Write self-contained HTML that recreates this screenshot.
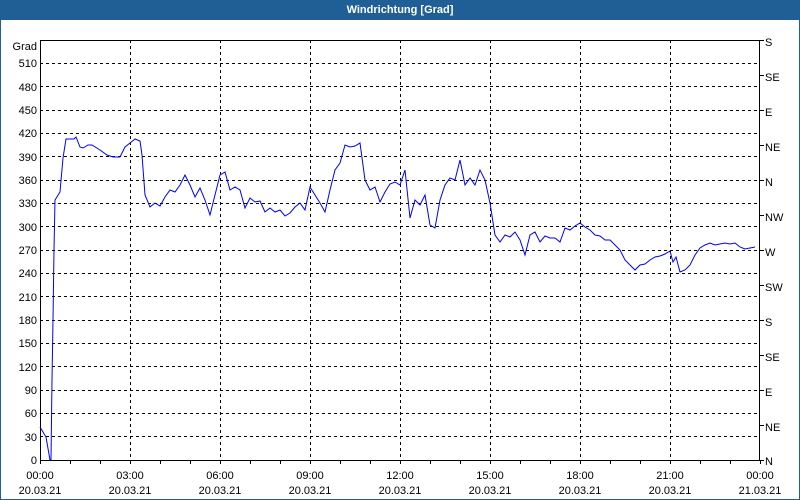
<!DOCTYPE html>
<html><head><style>
html,body{margin:0;padding:0;background:#fff;}
body{width:800px;height:500px;overflow:hidden;position:relative;font-family:"Liberation Sans",sans-serif;}
.title{position:absolute;left:0;top:0;width:800px;height:20px;background:#1f5f96;color:#fff;font-weight:bold;font-size:11px;text-align:center;line-height:20px;}
.frame{position:absolute;left:0;top:20px;width:798px;height:479px;border-left:1px solid #1f5f96;border-right:1px solid #1f5f96;border-bottom:1px solid #1f5f96;}
svg{position:absolute;left:0;top:0;}
text{font-family:"Liberation Sans",sans-serif;font-size:11px;fill:#000;}
</style></head><body>
<div class="title">Windrichtung [Grad]</div>
<div class="frame"></div>
<svg width="800" height="500" xmlns="http://www.w3.org/2000/svg">
<g stroke="#000" stroke-width="1" stroke-dasharray="3,3" shape-rendering="crispEdges">
<line x1="40" y1="63.5" x2="760" y2="63.5"/><line x1="40" y1="86.5" x2="760" y2="86.5"/><line x1="40" y1="110.5" x2="760" y2="110.5"/><line x1="40" y1="133.5" x2="760" y2="133.5"/><line x1="40" y1="156.5" x2="760" y2="156.5"/><line x1="40" y1="180.5" x2="760" y2="180.5"/><line x1="40" y1="203.5" x2="760" y2="203.5"/><line x1="40" y1="226.5" x2="760" y2="226.5"/><line x1="40" y1="250.5" x2="760" y2="250.5"/><line x1="40" y1="273.5" x2="760" y2="273.5"/><line x1="40" y1="296.5" x2="760" y2="296.5"/><line x1="40" y1="320.5" x2="760" y2="320.5"/><line x1="40" y1="343.5" x2="760" y2="343.5"/><line x1="40" y1="366.5" x2="760" y2="366.5"/><line x1="40" y1="390.5" x2="760" y2="390.5"/><line x1="40" y1="413.5" x2="760" y2="413.5"/><line x1="40" y1="436.5" x2="760" y2="436.5"/>
<line x1="130.5" y1="40" x2="130.5" y2="460"/><line x1="220.5" y1="40" x2="220.5" y2="460"/><line x1="310.5" y1="40" x2="310.5" y2="460"/><line x1="400.5" y1="40" x2="400.5" y2="460"/><line x1="490.5" y1="40" x2="490.5" y2="460"/><line x1="580.5" y1="40" x2="580.5" y2="460"/><line x1="670.5" y1="40" x2="670.5" y2="460"/>
</g>
<g stroke="#000" stroke-width="1" shape-rendering="crispEdges" fill="none">
<rect x="40.5" y="40.5" width="719" height="420"/>
<path d="M70.5 460v4M100.5 460v4M130.5 460v4M160.5 460v4M190.5 460v4M220.5 460v4M250.5 460v4M280.5 460v4M310.5 460v4M340.5 460v4M370.5 460v4M400.5 460v4M430.5 460v4M460.5 460v4M490.5 460v4M520.5 460v4M550.5 460v4M580.5 460v4M610.5 460v4M640.5 460v4M670.5 460v4M700.5 460v4M730.5 460v4M40.5 460v4M760.5 460v4"/>
<path d="M760 40.5h4M760 75.5h4M760 110.5h4M760 145.5h4M760 180.5h4M760 215.5h4M760 250.5h4M760 285.5h4M760 320.5h4M760 355.5h4M760 390.5h4M760 425.5h4M760 460.5h4"/>
</g>
<polyline fill="none" stroke="#0000ff" stroke-width="1" points="40,427 46,437 50,460 51,460 52,380 53,320 54,250 55,200 60,192 63,158 66,139 74,139 76,137 80,147 83,148 88,145 92,145 100,150 107,155 113,157 120,157 125,147 130,143 135,139 140,141 142,155 145,195 150,207 155,203 160,206 165,197 170,190 175,192 180,185 185,175 190,185 195,197 200,188 205,200 210,215 215,195 220,175 225,172 230,190 235,187 240,190 245,208 250,198 255,202 260,201 265,212 270,208 275,212 280,210 285,216 290,213 295,207 300,203 305,210 310,187 315,195 320,203 325,212 330,190 335,170 340,163 345,145 350,147 355,146 360,143 365,180 370,190 375,187 380,202 385,192 390,184 395,182 400,185 405,170 410,218 415,200 420,205 425,195 430,225 435,228 440,200 445,185 450,178 455,180 460,160 465,185 470,178 475,185 480,170 485,180 490,203 495,235 500,242 505,235 510,237 515,232 520,240 525,255 530,235 535,232 540,242 545,236 550,238 555,238 560,242 565,228 570,230 575,226 580,223 585,227 590,230 595,235 600,236 605,240 610,240 615,245 620,250 625,260 630,265 635,270 640,265 645,264 650,260 655,257 660,256 665,254 670,251 673,262 676,257 680,272 685,270 690,265 695,255 700,248 705,245 710,243 715,245 720,244 725,243 730,244 735,243 740,247 745,249 750,248 755,247"/>
<g text-anchor="end">
<text x="37" y="50">Grad</text>
<text x="37" y="67">510</text><text x="37" y="91">480</text><text x="37" y="114">450</text><text x="37" y="137">420</text><text x="37" y="161">390</text><text x="37" y="184">360</text><text x="37" y="207">330</text><text x="37" y="231">300</text><text x="37" y="254">270</text><text x="37" y="277">240</text><text x="37" y="301">210</text><text x="37" y="324">180</text><text x="37" y="347">150</text><text x="37" y="371">120</text><text x="37" y="394">90</text><text x="37" y="417">60</text><text x="37" y="441">30</text><text x="37" y="464">0</text>
</g>
<g>
<text x="765" y="46">S</text><text x="765" y="81">SE</text><text x="765" y="116">E</text><text x="765" y="151">NE</text><text x="765" y="186">N</text><text x="765" y="221">NW</text><text x="765" y="256">W</text><text x="765" y="291">SW</text><text x="765" y="326">S</text><text x="765" y="361">SE</text><text x="765" y="396">E</text><text x="765" y="431">NE</text><text x="765" y="465">N</text>
</g>
<g text-anchor="middle">
<text x="40" y="479">00:00</text><text x="40" y="494">20.03.21</text>
<text x="130" y="479">03:00</text><text x="130" y="494">20.03.21</text>
<text x="220" y="479">06:00</text><text x="220" y="494">20.03.21</text>
<text x="310" y="479">09:00</text><text x="310" y="494">20.03.21</text>
<text x="400" y="479">12:00</text><text x="400" y="494">20.03.21</text>
<text x="490" y="479">15:00</text><text x="490" y="494">20.03.21</text>
<text x="580" y="479">18:00</text><text x="580" y="494">20.03.21</text>
<text x="670" y="479">21:00</text><text x="670" y="494">20.03.21</text>
<text x="760" y="479">00:00</text><text x="760" y="494">21.03.21</text>
</g>
</svg>
</body></html>
